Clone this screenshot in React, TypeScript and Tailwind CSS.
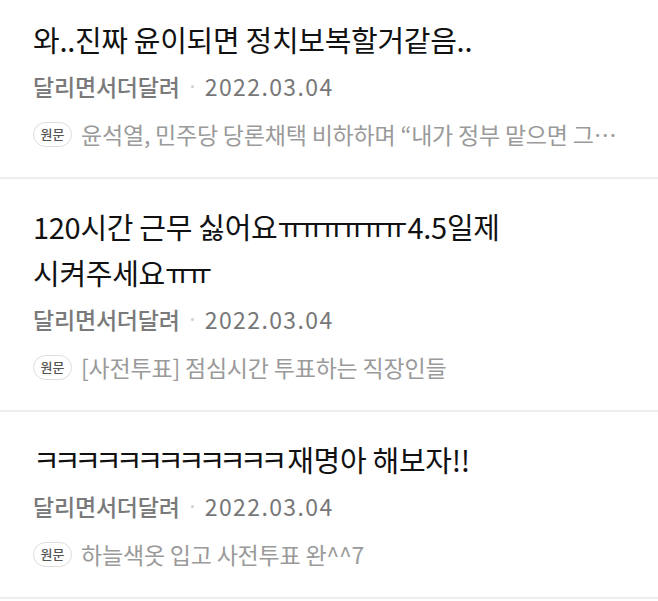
const font = { fontFamily: '"Noto Sans CJK KR", "Noto Sans", sans-serif' };

interface Post {
  title: React.ReactNode;
  author: string;
  date: string;
  snippet: string;
}

const jamo = 'tracking-[-6px] pr-[6px]';

const posts: Post[] = [
  {
    title: '와..진짜 윤이되면 정치보복할거같음..',
    author: '달리면서더달려',
    date: '2022.03.04',
    snippet: '윤석열, 민주당 당론채택 비하하며 “내가 정부 맡으면 그…',
  },
  {
    title: (
      <>
        120시간 근무 싫어요<span className={jamo}>ㅠㅠㅠㅠㅠㅠ</span>4.5일제
        <br />
        시켜주세요<span className={jamo}>ㅠㅠ</span>
      </>
    ),
    author: '달리면서더달려',
    date: '2022.03.04',
    snippet: '[사전투표] 점심시간 투표하는 직장인들',
  },
  {
    title: (
      <>
        <span className={jamo}>ㅋㅋㅋㅋㅋㅋㅋㅋㅋㅋㅋㅋ</span>재명아 해보자!!
      </>
    ),
    author: '달리면서더달려',
    date: '2022.03.04',
    snippet: '하늘색옷 입고 사전투표 완^^7',
  },
];

function PostItem({ post, first }: { post: Post; first?: boolean }) {
  return (
    <div className={`pl-[33px] pr-[33px] pt-[24px] pb-[19px] border-b-2 border-[#eeeeee] ${first ? '-mt-[8px]' : ''}`}>
      <div className="text-[29px] leading-[46px] text-[#111111] tracking-[-0.3px] whitespace-nowrap">{post.title}</div>
      <div className="flex items-center h-[48px] text-[23px]">
        <span className="font-medium text-[#7a7a7a] tracking-[-0.2px]">{post.author}</span>
        <span className="mx-[11px] w-[3px] h-[3px] rounded-full bg-[#cfcfcf]" />
        <span className="text-[#777777] tracking-[1.4px]">{post.date}</span>
      </div>
      <div className="flex items-center h-[48px]">
        <span className="shrink-0 flex items-center justify-center w-[39px] h-[25px] rounded-full border border-[#dddddd] text-[13px] font-medium text-[#555555]">
          원문
        </span>
        <span className="ml-[9px] truncate text-[23px] text-[#9a9a9a] tracking-[-0.2px]">{post.snippet}</span>
      </div>
    </div>
  );
}

export default function App() {
  return (
    <div className="w-[658px] h-[601px] overflow-hidden bg-white" style={font}>
      {posts.map((p, i) => (
        <PostItem key={i} post={p} first={i === 0} />
      ))}
    </div>
  );
}
